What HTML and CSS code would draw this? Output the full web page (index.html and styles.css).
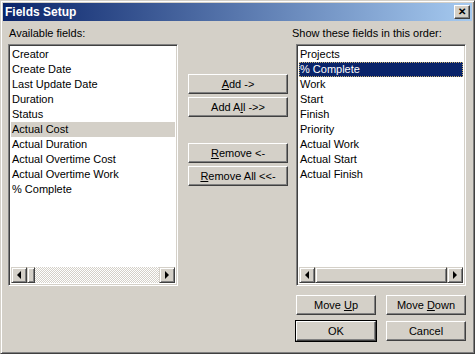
FILE: index.html
```html
<!DOCTYPE html>
<html lang="en">
<head>
    <meta charset="UTF-8">
    <title>Fields Setup</title>
    <link rel="stylesheet" href="styles.css">
</head>
<body>
    <div class="window">
        <div class="titlebar">
            <span class="title">Fields Setup</span>
            <span class="close-btn">&#x2715;</span>
        </div>
        <div class="content">
            <div class="column left-col">
                <div class="label">Available fields:</div>
                <div class="listbox">
                    <ul class="items">
                        <li>Creator</li>
                        <li>Create Date</li>
                        <li>Last Update Date</li>
                        <li>Duration</li>
                        <li>Status</li>
                        <li class="inactive-sel">Actual Cost</li>
                        <li>Actual Duration</li>
                        <li>Actual Overtime Cost</li>
                        <li>Actual Overtime Work</li>
                        <li>% Complete</li>
                    </ul>
                    <div class="hscroll">
                        <div class="sb-btn"><span class="arrow-left"></span></div>
                        <div class="sb-thumb small"></div>
                        <div class="sb-track"></div>
                        <div class="sb-btn"><span class="arrow-right"></span></div>
                    </div>
                </div>
            </div>

            <div class="column mid-col">
                <div class="btn-group">
                    <button class="btn"><u>A</u>dd -&gt;</button>
                    <button class="btn">Add A<u>l</u>l -&gt;&gt;</button>
                </div>
                <div class="btn-group">
                    <button class="btn"><u>R</u>emove &lt;-</button>
                    <button class="btn"><u>R</u>emove All &lt;&lt;-</button>
                </div>
            </div>

            <div class="column right-col">
                <div class="label shifted">Show these fields in this order:</div>
                <div class="listbox">
                    <ul class="items">
                        <li>Projects</li>
                        <li class="selected">% Complete</li>
                        <li>Work</li>
                        <li>Start</li>
                        <li>Finish</li>
                        <li>Priority</li>
                        <li>Actual Work</li>
                        <li>Actual Start</li>
                        <li>Actual Finish</li>
                    </ul>
                    <div class="hscroll">
                        <div class="sb-btn"><span class="arrow-left"></span></div>
                        <div class="sb-thumb wide"></div>
                        <div class="sb-btn"><span class="arrow-right"></span></div>
                    </div>
                </div>
                <div class="btn-row">
                    <button class="btn">Move <u>U</u>p</button>
                    <button class="btn">Move <u>D</u>own</button>
                </div>
                <div class="btn-row">
                    <button class="btn default">OK</button>
                    <button class="btn">Cancel</button>
                </div>
            </div>
        </div>
    </div>
</body>
</html>
```

FILE: styles.css
```css
body {
    margin: 0;
    font-family: "Liberation Sans", Arial, sans-serif;
    font-size: 11px;
    background: #d4d0c8;
}
.window {
    width: 475px;
    height: 354px;
    box-sizing: border-box;
    background: #d4d0c8;
    border: 1px solid;
    border-color: #d4d0c8 #404040 #404040 #d4d0c8;
    box-shadow: inset 1px 1px #fff, inset -1px -1px #808080;
    padding: 2px;
}
.titlebar {
    height: 18px;
    background: linear-gradient(to right, #0a246a, #a6caf0);
    display: flex;
    align-items: center;
    justify-content: space-between;
    padding: 0 2px 0 2px;
}
.title {
    color: #fff;
    font-weight: bold;
    font-size: 12px;
    font-family: "Liberation Sans", Arial, sans-serif;
}
.close-btn {
    width: 16px;
    height: 14px;
    box-sizing: border-box;
    background: #d4d0c8;
    border: 1px solid;
    border-color: #fff #404040 #404040 #fff;
    box-shadow: inset -1px -1px #808080;
    font-size: 10px;
    font-weight: bold;
    line-height: 12px;
    text-align: center;
    color: #000;
}
.content {
    display: flex;
    padding: 0 0 0 5px;
}
.column {
    display: flex;
    flex-direction: column;
}
.left-col {
    width: 170px;
}
.mid-col {
    width: 100px;
    margin-left: 10px;
    padding-top: 53px;
    gap: 26px;
}
.right-col {
    width: 170px;
    margin-left: 8px;
}
.label {
    height: 17px;
    line-height: 12px;
    padding: 6px 0 0 1px;
    color: #000;
}
.label.shifted {
    margin-left: -5px;
}
.listbox {
    height: 242px;
    box-sizing: border-box;
    background: #fff;
    border: 1px solid;
    border-color: #808080 #fff #fff #808080;
    box-shadow: inset 1px 1px #404040, inset -1px -1px #d4d0c8;
    padding: 2px;
    display: flex;
    flex-direction: column;
}
.items {
    list-style: none;
    margin: 0;
    padding: 0;
    flex: 1;
}
.items li {
    height: 15px;
    line-height: 15px;
    padding-left: 1px;
    white-space: nowrap;
    color: #000;
}
.items li.inactive-sel {
    background: #d4d0c8;
}
.items li.selected {
    background: #0a246a;
    color: #fff;
    outline: 1px dotted #c8b070;
    outline-offset: -1px;
}
.hscroll {
    height: 16px;
    display: flex;
}
.sb-btn,
.sb-thumb {
    width: 16px;
    height: 16px;
    box-sizing: border-box;
    background: #d4d0c8;
    border: 1px solid;
    border-color: #d4d0c8 #404040 #404040 #d4d0c8;
    box-shadow: inset 1px 1px #fff, inset -1px -1px #808080;
    display: flex;
    align-items: center;
    justify-content: center;
}
.sb-thumb.small {
    width: 8px;
}
.sb-thumb.wide {
    flex: 1;
}
.sb-track {
    flex: 1;
    background: repeating-conic-gradient(#d4d0c8 0 25%, #fff 0 50%) 0 0 / 2px 2px;
}
.arrow-left {
    width: 0;
    height: 0;
    border-top: 4px solid transparent;
    border-bottom: 4px solid transparent;
    border-right: 4px solid #000;
}
.arrow-right {
    width: 0;
    height: 0;
    border-top: 4px solid transparent;
    border-bottom: 4px solid transparent;
    border-left: 4px solid #000;
}
.btn-group {
    display: flex;
    flex-direction: column;
    gap: 3px;
}
.btn {
    width: 100px;
    height: 20px;
    box-sizing: border-box;
    padding: 0;
    margin: 0;
    font-family: "Liberation Sans", Arial, sans-serif;
    font-size: 11px;
    color: #000;
    background: #d4d0c8;
    border: 1px solid;
    border-color: #fff #404040 #404040 #fff;
    box-shadow: inset -1px -1px #808080;
    border-radius: 0;
}
.btn-row {
    display: flex;
    justify-content: space-between;
    margin-top: 9px;
}
.btn-row + .btn-row {
    margin-top: 6px;
}
.btn-row .btn {
    width: 80px;
}
.btn.default {
    outline: 1px solid #000;
    outline-offset: 0;
}
```
